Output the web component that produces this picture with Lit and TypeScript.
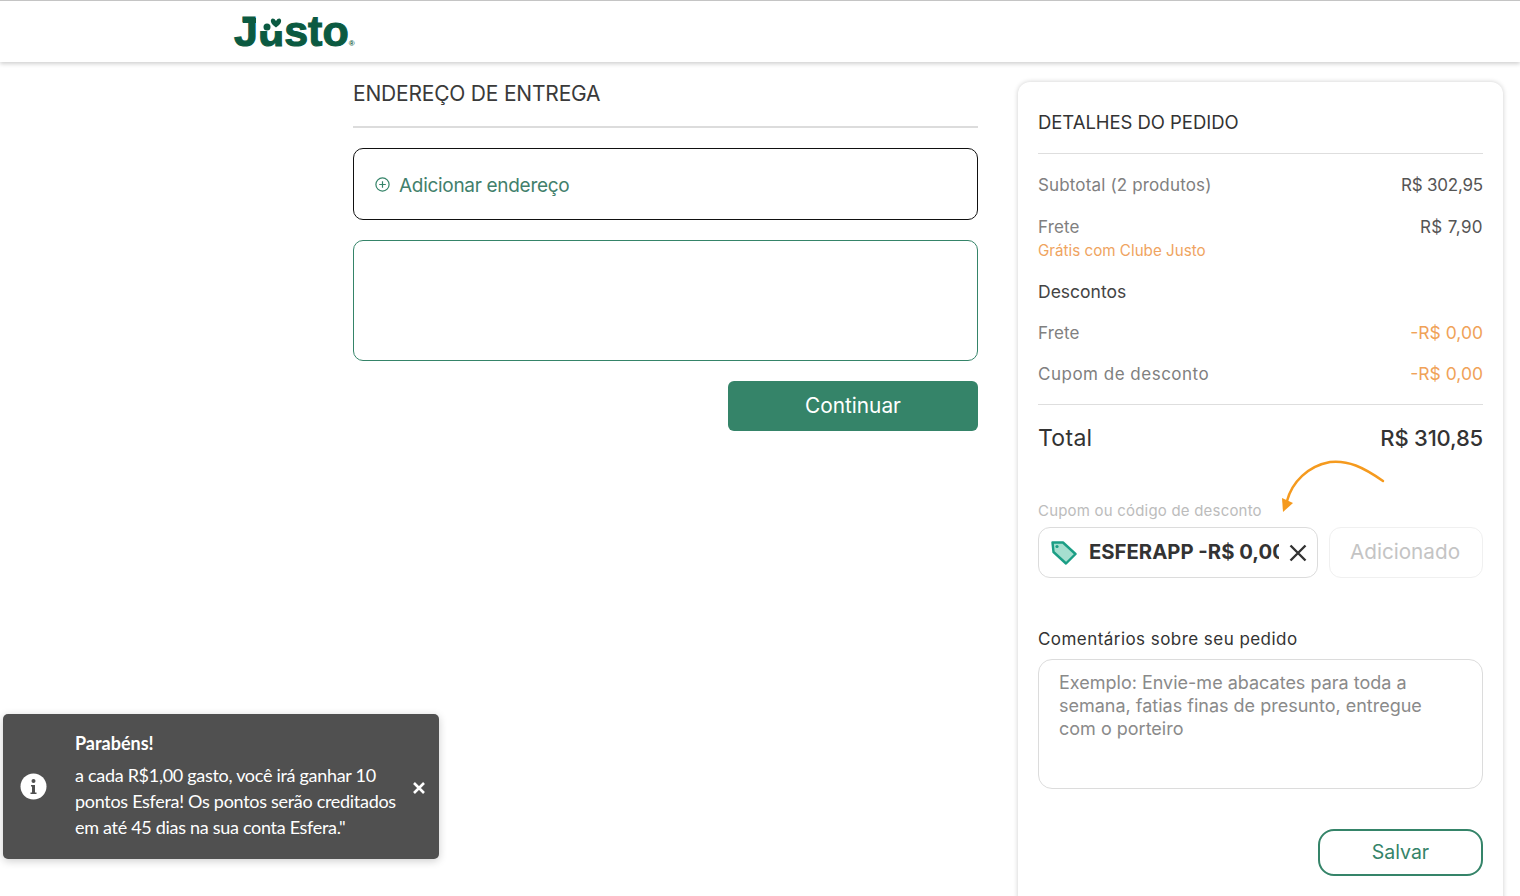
import { LitElement, html, css } from "lit";
import { customElement } from "lit/decorators.js";

@customElement("app-root")
export class AppRoot extends LitElement {
  static styles = css`
    :host { display: block; position: relative; width: 1520px; height: 896px; overflow: hidden; background: #fff; font-family: "Inter", "Noto Sans", sans-serif; color: #333; }
    * { box-sizing: border-box; }
    .header { height: 62px; border-top: 1px solid #c4c4c4; background: #fff; box-shadow: 0 2px 4px rgba(0,0,0,.18); padding-left: 234px; display: flex; align-items: center; position: relative; }
    .logo { display: flex; align-items: baseline; color: #0b5a41; font: 700 43px/1 "Liberation Sans", sans-serif; -webkit-text-stroke: 1.1px #0b5a41; margin-top: 0; }
    .logo .j { position: relative; }
    .logo .j::before { content: ""; position: absolute; left: 9px; top: 8px; width: 13px; height: 5px; background: #0b5a41; }
    .logo .u { position: relative; }
    .logo .u svg { position: absolute; left: -1px; top: 6px; }
    .logo .reg { font: 700 8px/1 "Liberation Sans", sans-serif; -webkit-text-stroke: 0; margin-left: 0; }
    .main { display: flex; gap: 40px; padding-left: 353px; }
    .left { width: 625px; display: flex; flex-direction: column; }
    .h-title { font-size: 21px; line-height: 24px; margin-top: 20px; padding-bottom: 20px; border-bottom: 2px solid #dcdcdc; color: #3a3a3a; letter-spacing: -.2px; }
    .add { margin-top: 20px; height: 72px; border: 1px solid #111; border-radius: 10px; display: flex; align-items: center; padding-left: 21px; gap: 9px; color: #42806b; font-size: 19px; letter-spacing: -.3px; }
    .add span { padding-top: 2px; }
    .empty { margin-top: 20px; height: 121px; border: 1px solid #358469; border-radius: 10px; }
    .actions { margin-top: 20px; display: flex; justify-content: flex-end; }
    .continue { width: 250px; height: 50px; background: #358469; border-radius: 6px; color: #fff; font-size: 20.8px; padding-bottom: 2px; display: flex; align-items: center; justify-content: center; }
    .card { margin-top: 20px; width: 485px; height: 840px; border-radius: 12px; box-shadow: 0 0 5px rgba(0,0,0,.2); padding: 0 20px; display: flex; flex-direction: column; position: relative; }
    .c-title { font-size: 18.5px; line-height: 24px; padding: 28px 0 18px; border-bottom: 1px solid #dedede; color: #333; letter-spacing: -.05px; height: 72px; }
    .row { display: flex; justify-content: space-between; font-size: 17px; line-height: 22px; color: #808080; letter-spacing: .15px; }
    .row .val { color: #555; letter-spacing: -.2px; }
    .row .off { color: #f0a258; font-size: 17.5px; letter-spacing: 0; }
    .r1 { margin-top: 20px; }
    .r2 { margin-top: 20px; }
    .r2 .val { letter-spacing: .4px; }
    .free { color: #efa45f; font-size: 15.2px; line-height: 20px; margin-top: 3px; }
    .sub { font-size: 17.5px; line-height: 22px; color: #444; margin-top: 20px; }
    .r3 { margin-top: 19px; }
    .r4 { margin-top: 19px; padding-bottom: 19px; border-bottom: 1px solid #dedede; letter-spacing: .5px; }
    .total { display: flex; justify-content: space-between; font-size: 23px; line-height: 28px; margin-top: 19px; color: #333; letter-spacing: .3px; }
    .total b { font-weight: 500; font-size: 22px; letter-spacing: -.2px; }
    .label { margin-top: 50px; font-size: 15px; line-height: 18px; color: #bcbcbc; letter-spacing: .2px; }
    .coupon { margin-top: 7px; display: flex; gap: 11px; height: 51px; }
    .code { width: 280px; border: 1px solid #dcdcdc; border-radius: 12px; display: flex; align-items: center; padding-left: 12px; }
    .code .txt { margin-left: 12px; width: 190px; padding-bottom: 2px; overflow: hidden; white-space: nowrap; font-weight: 700; font-size: 20.3px; color: #333; }
    .code svg.x { margin-left: 10px; }
    .added { width: 154px; border: 1px solid #f0f0f0; border-radius: 12px; padding: 0 2px 2px 0; display: flex; align-items: center; justify-content: center; color: #c4c4c4; font-size: 20.7px; }
    .clabel { margin-top: 50px; font-size: 17px; line-height: 22px; color: #333; letter-spacing: .45px; }
    .ta { margin-top: 9px; height: 130px; border: 1px solid #dcdcdc; border-radius: 14px; padding: 11px 20px; font-size: 18px; line-height: 23px; color: #8a8a8a; }
    .save-wrap { margin-top: 40px; display: flex; justify-content: flex-end; }
    .save { width: 165px; height: 47px; border: 2px solid #358469; border-radius: 16px; padding-bottom: 2px; color: #358469; font-size: 19.5px; display: flex; align-items: center; justify-content: center; }
    .arrow { position: absolute; left: 260px; top: 375px; }
    .toast { position: absolute; left: 3px; top: 714px; width: 436px; height: 145px; background: #505050; border-radius: 5px; box-shadow: 0 2px 8px rgba(0,0,0,.2); color: #fff; font-family: "Lato", sans-serif; display: flex; align-items: center; }
    .t-icon { margin-left: 17px; width: 27px; flex: none; display: flex; }
    .t-body { margin-left: 28px; width: 335px; font-size: 18px; line-height: 26px; letter-spacing: -.3px; margin-top: -3px; }
    .t-body b { display: block; font-weight: 700; line-height: 26px; margin-bottom: 6px; letter-spacing: 0; }
    .t-close { margin-left: 2px; padding-top: 2px; display: flex; }
  `;

  render() {
    return html`
      <div class="header">
        <div class="logo">
          <span class="j">J</span>
          <span class="u">u<svg width="30" height="20" viewBox="0 0 30 20"><rect x="2" width="26" height="15" fill="#fff"/><circle cx="10" cy="11" r="3.5" fill="#0b5a41"/><path d="M19 5 C17 1 13 2 14 6 C14.5 8 17 10 19 11.5 C21 10 23.5 8 24 6 C25 2 21 1 19 5 Z" fill="#0b5a41"/></svg></span>
          <span>sto</span><span class="reg">®</span>
        </div>
      </div>
      <div class="main">
        <div class="left">
          <div class="h-title">ENDEREÇO DE ENTREGA</div>
          <div class="add">
            <svg width="15" height="15" viewBox="0 0 15 15" fill="none" stroke="#358469" stroke-width="1.2"><circle cx="7.5" cy="7.5" r="6.6"/><path d="M7.5 4.2v6.6M4.2 7.5h6.6"/></svg>
            <span>Adicionar endereço</span>
          </div>
          <div class="empty"></div>
          <div class="actions"><div class="continue">Continuar</div></div>
        </div>
        <div class="card">
          <div class="c-title">DETALHES DO PEDIDO</div>
          <div class="row r1"><span>Subtotal (2 produtos)</span><span class="val">R$ 302,95</span></div>
          <div class="row r2"><span>Frete</span><span class="val">R$ 7,90</span></div>
          <div class="free">Grátis com Clube Justo</div>
          <div class="sub">Descontos</div>
          <div class="row r3"><span>Frete</span><span class="off">-R$ 0,00</span></div>
          <div class="row r4"><span>Cupom de desconto</span><span class="off">-R$ 0,00</span></div>
          <div class="total"><span>Total</span><b>R$ 310,85</b></div>
          <div class="label">Cupom ou código de desconto</div>
          <div class="coupon">
            <div class="code">
              <svg width="26" height="24" viewBox="0 0 26 24"><path d="M1.5 1.5 L12 1.5 L24.5 13 L15 22.5 L2.5 11 Z" fill="#a5dfcf" stroke="#1b9e85" stroke-width="2.4" stroke-linejoin="round"/><circle cx="6" cy="5.5" r="1.6" fill="#1b9e85"/></svg>
              <div class="txt">ESFERAPP -R$ 0,00</div>
              <svg class="x" width="18" height="18" viewBox="0 0 18 18" stroke="#333" stroke-width="2.4"><path d="M1.5 1.5l15 15M16.5 1.5l-15 15"/></svg>
            </div>
            <div class="added">Adicionado</div>
          </div>
          <div class="clabel">Comentários sobre seu pedido</div>
          <div class="ta">Exemplo: Envie-me abacates para toda a semana, fatias finas de presunto, entregue com o porteiro</div>
          <div class="save-wrap"><div class="save">Salvar</div></div>
          <svg class="arrow" width="110" height="60" viewBox="0 0 110 60" fill="none">
            <path d="M105 24 C85 10 70 3 52 5 C30 9 14 25 9 44" stroke="#f59a1e" stroke-width="2.5" stroke-linecap="round"/>
            <path d="M4 41 L15 46 L5 55 Z" fill="#f59a1e"/>
          </svg>
        </div>
      </div>
      <div class="toast">
        <div class="t-icon"><svg width="27" height="27" viewBox="0 0 27 27"><circle cx="13.5" cy="13.5" r="13" fill="#fff"/><circle cx="13.5" cy="8" r="2" fill="#505050"/><path d="M11 12h4v7.5h1.5V21h-6v-1.5H12V13.5h-1Z" fill="#505050"/></svg></div>
        <div class="t-body"><b>Parabéns!</b>a cada R$1,00 gasto, você irá ganhar 10 pontos Esfera! Os pontos serão creditados em até 45 dias na sua conta Esfera."</div>
        <div class="t-close"><svg width="14" height="14" viewBox="0 0 14 14" stroke="#fff" stroke-width="2.6"><path d="M2 2l10 10M12 2L2 12"/></svg></div>
      </div>
    `;
  }
}
